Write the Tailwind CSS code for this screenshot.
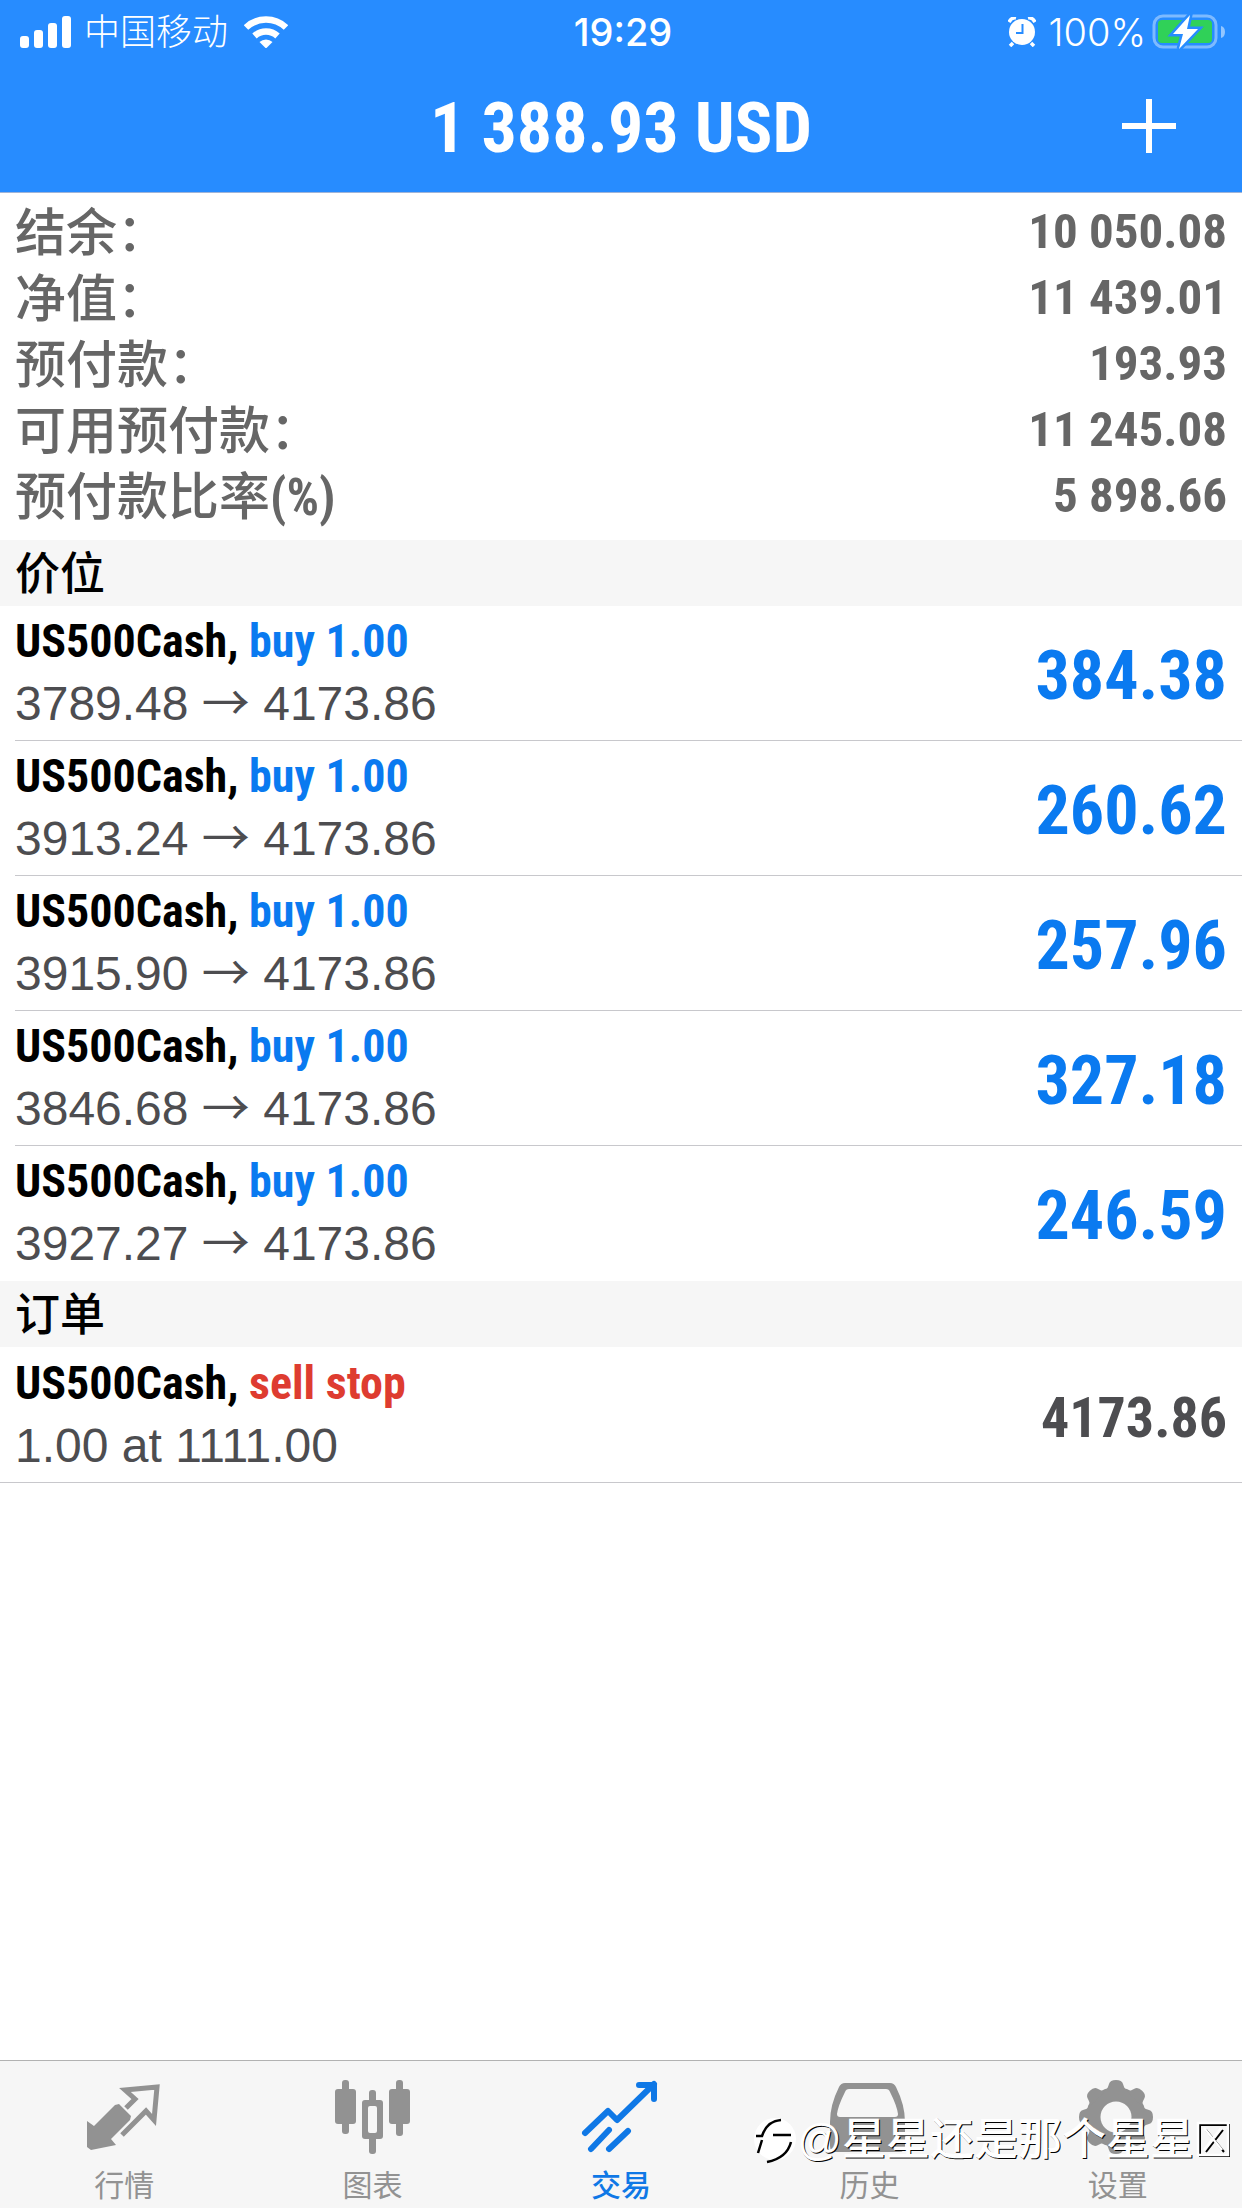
<!DOCTYPE html>
<html lang="zh-CN">
<head>
<meta charset="utf-8">
<meta name="viewport" content="width=device-width, initial-scale=1">
<title>交易</title>
<script src="https://cdn.jsdelivr.net/npm/@tailwindcss/browser@4"></script>
</head>
<body class="relative flex min-h-screen flex-col bg-white font-['Liberation_Sans','Noto_Sans_CJK_SC',sans-serif]">

<header class="border-b border-[#9fb4d8] bg-[#278cff] text-white">
  <div class="grid h-16 grid-cols-[1fr_auto_1fr] items-center pr-4 pl-5 font-['Inter','Noto_Sans_CJK_SC',sans-serif] text-[36px] leading-9">
    <div class="flex items-center">
      <svg class="h-8 w-[52px]" viewBox="0 0 52 32" fill="currentColor" aria-hidden="true">
        <rect x="0" y="20" width="9" height="12" rx="3"/><rect x="14" y="14" width="9" height="18" rx="3"/><rect x="28" y="7" width="9" height="25" rx="3"/><rect x="42" y="0" width="9" height="32" rx="3"/>
      </svg>
      <span class="ml-3 font-light">中国移动</span>
      <svg class="ml-4 h-8 w-[44px]" viewBox="0 0 44 32" aria-hidden="true">
        <g fill="none" stroke="currentColor" stroke-width="6.5"><path d="M2 11.500a29 29 0 0 1 40 0"/><path d="M10.500 20a17 17 0 0 1 23 0"/></g>
        <path d="M15.500 26a9.500 9.500 0 0 1 13 0L22 32.500z" fill="currentColor"/>
      </svg>
    </div>
    <span class="text-center text-[38px] font-medium">19:29</span>
    <div class="flex items-center justify-end">
      <svg class="h-[30px] w-7" viewBox="0 0 28 30" aria-hidden="true">
        <circle cx="14" cy="15" r="13" fill="currentColor"/>
        <path d="M1 5q3-5 7-4M27 5q-3-5-7-4M5 26l-3 3M23 26l3 3" fill="none" stroke="currentColor" stroke-width="3.500"/>
        <path d="M14.500 7v9H8" fill="none" stroke="#278cff" stroke-width="2"/>
      </svg>
      <span class="ml-3 text-[38px]/9 font-light">100%</span>
      <svg class="ml-[6px] h-9 w-[74px]" viewBox="0 0 74 36" aria-hidden="true">
        <rect x="2" y="2" width="62" height="31" rx="9" fill="none" stroke="#fff" stroke-opacity=".4" stroke-width="3"/>
        <path d="M69 12q4 1 4 6t-4 6z" fill="#fff" fill-opacity=".5"/>
        <rect x="6" y="6" width="54" height="23" rx="4" fill="#30d158"/>
        <path class="[paint-order:stroke]" d="M38 1L21 20h10l-4 15 19-20H35z" fill="#fff" stroke="#278cff" stroke-width="5"/>
      </svg>
    </div>
  </div>
  <div class="grid h-32 grid-cols-[1fr_auto_1fr] items-center px-[66px]">
    <h1 class="col-start-2 font-['Roboto_Condensed','Liberation_Sans',sans-serif] text-[70px] leading-[80px] font-bold">1 388.93 USD</h1>
    <button class="justify-self-end pb-1" aria-label="新订单">
      <svg class="h-[54px] w-[54px]" viewBox="0 0 54 54" stroke="currentColor" stroke-width="6" aria-hidden="true"><path d="M27 0v54M0 27h54"/></svg>
    </button>
  </div>
</header>

<main class="flex-1">
  <dl class="px-[15px] pt-[3px] pb-[14px] font-['Noto_Sans_CJK_SC',sans-serif] text-[51px] leading-[66px] font-medium text-[#666]">
    <div class="flex justify-between"><dt>结余：</dt><dd class="pt-[6px] font-['Roboto_Condensed'] text-[49px] leading-[60px] font-bold">10 050.08</dd></div>
    <div class="flex justify-between"><dt>净值：</dt><dd class="pt-[6px] font-['Roboto_Condensed'] text-[49px] leading-[60px] font-bold">11 439.01</dd></div>
    <div class="flex justify-between"><dt>预付款：</dt><dd class="pt-[6px] font-['Roboto_Condensed'] text-[49px] leading-[60px] font-bold">193.93</dd></div>
    <div class="flex justify-between"><dt>可用预付款：</dt><dd class="pt-[6px] font-['Roboto_Condensed'] text-[49px] leading-[60px] font-bold">11 245.08</dd></div>
    <div class="flex justify-between"><dt>预付款比率<span class="font-['Roboto_Condensed'] leading-none font-bold">(%)</span></dt><dd class="pt-[6px] font-['Roboto_Condensed'] text-[49px] leading-[60px] font-bold">5 898.66</dd></div>
  </dl>

  <h2 class="bg-[#f6f6f6] px-[15px] pt-[3px] text-[45px] leading-[63px] font-medium">价位</h2>
  <ul id="positions" class="pl-[15px]"></ul>

  <h2 class="bg-[#f6f6f6] px-[15px] pt-[3px] text-[45px] leading-[63px] font-medium">订单</h2>
  <ul>
    <li class="flex h-[136px] items-center justify-between border-b border-[#c8c8cc] px-[15px]">
      <div>
        <p class="font-['Roboto_Condensed','Liberation_Sans',sans-serif] text-[46px] leading-[62px] font-bold">US500Cash, <span class="text-[#de3c30]">sell stop</span></p>
        <p class="text-[48px] leading-[64px] text-[#4d4d50]">1.00 at 1111.00</p>
      </div>
      <p class="pt-[6px] font-['Roboto_Condensed','Liberation_Sans',sans-serif] text-[56px] leading-[72px] font-bold text-[#4d4d50]">4173.86</p>
    </li>
  </ul>
</main>

<nav class="grid h-[148px] grid-cols-5 border-t border-[#b2b2b2] bg-[#f6f6f6] text-[30px] leading-9 text-[#929292]">
  <a href="#quotes" class="flex flex-col items-center gap-[9px] pt-[18px]">
    <svg class="h-20 w-20" viewBox="0 0 80 80" aria-hidden="true">
      <path d="M3 42l7 5 21-21 4-1 12 12-1 4-19 19 5 6-25 5-4-3z" fill="currentColor"/>
      <path d="M42 29l9-9-10-9 32-3-3 33-8-9-24 24" fill="none" stroke="currentColor" stroke-width="5"/>
    </svg>
    行情
  </a>
  <a href="#charts" class="flex flex-col items-center gap-[9px] pt-[18px]">
    <svg class="h-20 w-20" viewBox="0 0 80 80" fill="currentColor" aria-hidden="true">
      <rect x="9" y="1" width="7" height="54" rx="3"/><rect x="2" y="10" width="21" height="35" rx="3"/>
      <rect x="63" y="1" width="7" height="56" rx="3"/><rect x="56" y="10" width="21" height="35" rx="3"/>
      <rect x="36" y="11" width="7" height="64" rx="3"/><rect x="29" y="21" width="21" height="39" rx="3"/>
      <rect x="35" y="27" width="9" height="27" rx="2" fill="#f6f6f6"/>
    </svg>
    图表
  </a>
  <a href="#trade" aria-current="page" class="flex flex-col items-center gap-[9px] pt-[18px] font-medium text-[#0f78e6]">
    <svg class="h-20 w-20" viewBox="0 0 80 80" fill="none" stroke="currentColor" stroke-width="6" stroke-linecap="round" stroke-linejoin="round" aria-hidden="true">
      <path d="M4 54l23-22 9 9L73 5M58 6h15v14M10 70l18-19M28 70l19-18"/>
    </svg>
    交易
  </a>
  <a href="#history" class="flex flex-col items-center gap-[9px] pt-[18px]">
    <svg class="h-20 w-20" viewBox="0 0 80 80" aria-hidden="true">
      <path fill-rule="evenodd" fill="currentColor" d="M16 4h45q4 0 6 4 9 18 9 35v24q0 6-6 6H7q-6 0-6-6V43Q1 26 10 8q2-4 6-4zm4 6q-3 0-4 3-7 14-8 22 0 3 3 3h55q3 0 3-3-1-8-8-22-1-3-4-3z"/>
    </svg>
    历史
  </a>
  <a href="#settings" class="flex flex-col items-center gap-[9px] pt-[18px]">
    <svg class="h-20 w-20" viewBox="0 0 80 80" aria-hidden="true">
      <g fill="currentColor">
        <circle cx="38" cy="38" r="30"/>
        <path id="tooth" d="M26 12q3 0 5-7 1-4 7-4t7 4q2 7 5 7z"/>
        <use href="#tooth" transform="rotate(45 38 38)"/><use href="#tooth" transform="rotate(90 38 38)"/><use href="#tooth" transform="rotate(135 38 38)"/><use href="#tooth" transform="rotate(180 38 38)"/><use href="#tooth" transform="rotate(225 38 38)"/><use href="#tooth" transform="rotate(270 38 38)"/><use href="#tooth" transform="rotate(315 38 38)"/>
      </g>
      <circle cx="38" cy="38" r="15.500" fill="#f6f6f6"/>
    </svg>
    设置
  </a>
</nav>

<!-- author mark over the tab bar -->
<div class="pointer-events-none absolute right-[10px] bottom-[44px] flex items-center text-[44px] leading-[48px] font-medium text-white [text-shadow:1px_1px_0_#000]">
  <svg class="h-12 w-11" viewBox="0 0 44 48" aria-hidden="true">
    <circle cx="22" cy="23" r="21" fill="#fff"/>
    <path d="M3 20h6Q14 5 28 4M9 24L5 37M20 19h18M38 26Q34 42 14 46" fill="none" stroke="#000" stroke-width="2.500"/>
  </svg>
  <span>@星星还是那个星星</span>
  <svg class="ml-[2px] h-[38px] w-9" viewBox="0 0 36 38" fill="none" aria-hidden="true">
    <path d="M3 3h29v31H3zM9 8l18 22M26 8L9 30" stroke="#000" stroke-width="2" transform="translate(1 1)"/>
    <path d="M2 2h30v32H2zM8 7l18 22M25 7L8 29" stroke="#fff" stroke-width="2.500"/>
  </svg>
</div>

<script>
  const positions = [
    ['3789.48', '384.38'],
    ['3913.24', '260.62'],
    ['3915.90', '257.96'],
    ['3846.68', '327.18'],
    ['3927.27', '246.59'],
  ];
  document.getElementById('positions').innerHTML = positions.map(([open, profit]) => `
    <li class="flex h-[135px] items-center justify-between border-b border-[#c8c8cc] pr-[15px] last:border-transparent">
      <div>
        <p class="font-['Roboto_Condensed','Liberation_Sans',sans-serif] text-[46px] leading-[62px] font-bold">US500Cash, <span class="text-[#0a7af0]">buy 1.00</span></p>
        <p class="text-[48px] leading-[64px] text-[#4d4d50]">${open} <span class="font-['Noto_Sans_CJK_SC'] leading-none">→</span> 4173.86</p>
      </div>
      <p class="pt-[6px] font-['Roboto_Condensed','Liberation_Sans',sans-serif] text-[68px] leading-[80px] font-bold text-[#0a7af0]">${profit}</p>
    </li>`).join('');
</script>
</body>
</html>
